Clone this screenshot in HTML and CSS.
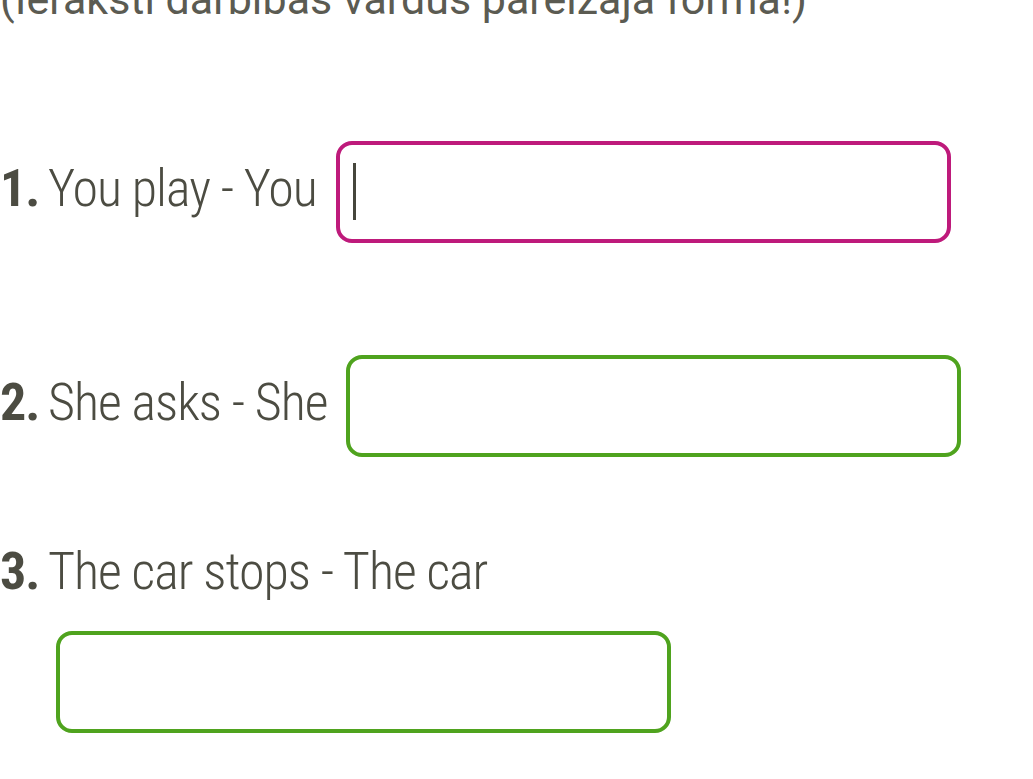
FILE: index.html
```html
<!DOCTYPE html>
<html lang="lv">
<head>
<meta charset="utf-8">
<title>Exercise</title>
<link rel="stylesheet" href="styles.css">
</head>
<body>
<main class="exercise">
  <p class="instruction">(Ieraksti darbības vārdus pareizajā formā!)</p>
  <ol class="items">
    <li class="item">
      <span class="num">1.</span>
      <div class="body">You play - You <span class="field"><input class="answer answer-active" type="text" aria-label="1"><span class="caret"></span></span></div>
    </li>
    <li class="item">
      <span class="num">2.</span>
      <div class="body">She asks - She <span class="field"><input class="answer" type="text" aria-label="2"></span></div>
    </li>
    <li class="item">
      <span class="num">3.</span>
      <div class="body">The car stops - The car <span class="field"><input class="answer" type="text" aria-label="3"></span></div>
    </li>
  </ol>
</main>
</body>
</html>
```
FILE: styles.css
```css
html, body {
  margin: 0;
  padding: 0;
  background: #ffffff;
}

.exercise {
  font-family: "Roboto Condensed", "Roboto", "Liberation Sans", sans-serif;
  color: #4c4c42;
}

.instruction {
  font-family: "Roboto", "Liberation Sans", sans-serif;
  font-size: 43px;
  line-height: 50px;
  color: #5b5b52;
  margin: -26px 0 0 0;
  white-space: nowrap;
}

.items {
  list-style: none;
  margin: 89px 0 0 0;
  padding: 0;
  display: flex;
  flex-direction: column;
  gap: 56px;
}

.item {
  display: flex;
  align-items: baseline;
  font-size: 52px;
  line-height: 62px;
  font-weight: 300;
  letter-spacing: -1px;
}

.num {
  font-weight: 700;
  width: 48px;
  flex: none;
}

.body {
  flex: 1;
}

.field {
  position: relative;
  display: inline-block;
  vertical-align: middle;
  margin: 28px 0 28px 8px;
  letter-spacing: 0;
}

.answer {
  display: block;
  box-sizing: border-box;
  width: 615px;
  height: 102px;
  border: 4px solid #4fa31e;
  border-radius: 16px;
  background: #ffffff;
  outline: none;
  padding: 0 12px;
  font: inherit;
}

.answer-active {
  border-color: #be1a7b;
}

.caret {
  position: absolute;
  left: 17px;
  top: 22px;
  width: 3px;
  height: 57px;
  background: #46463c;
}
```
